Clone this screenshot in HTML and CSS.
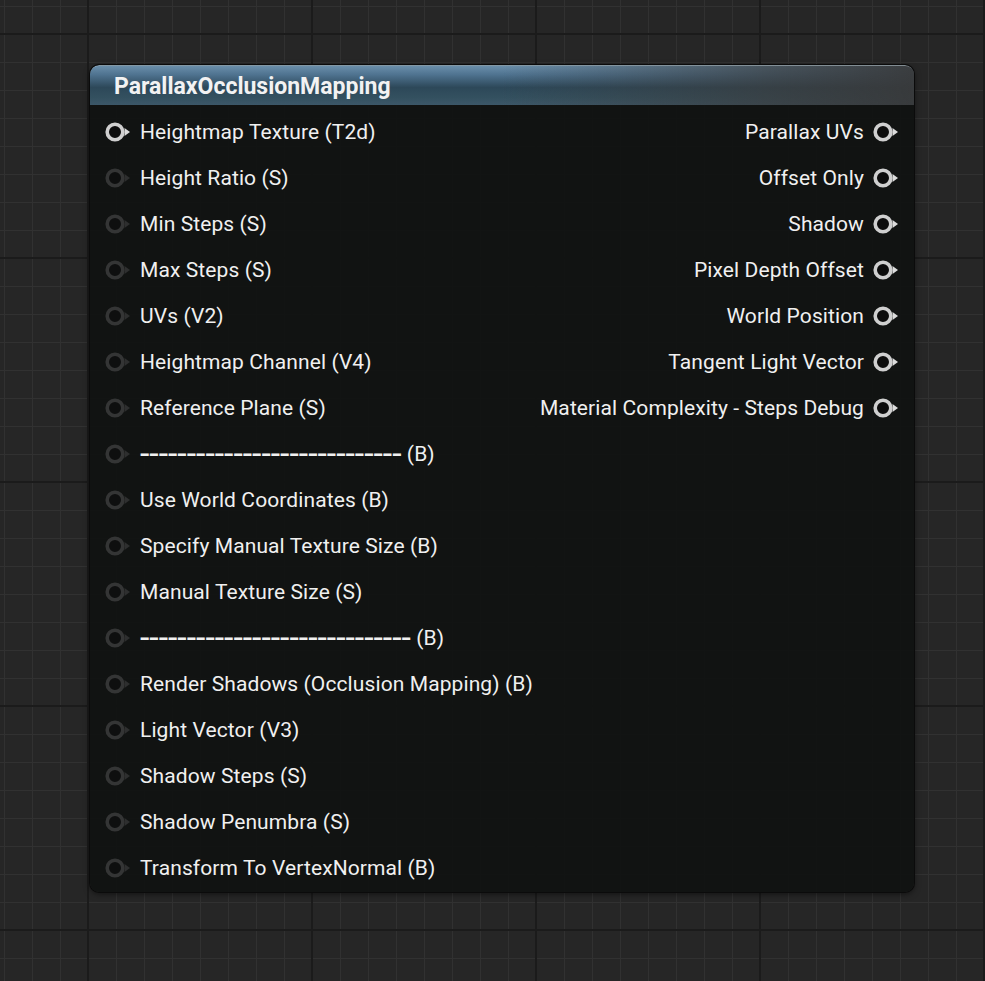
FILE: index.html
```html
<!DOCTYPE html>
<html>
<head>
<meta charset="utf-8">
<link rel="stylesheet" href="styles.css">
</head>
<body>
<div class="canvas">
  <div class="node">
    <div class="node-header">ParallaxOcclusionMapping</div>
    <div class="node-body">
      <div class="col inputs">
        <div class="pin-row"><svg class="pin on" viewBox="0 0 28 20"><circle cx="10" cy="10" r="7.8"/><polygon points="19.5,6 25,10 19.5,14"/></svg><span>Heightmap Texture (T2d)</span></div>
        <div class="pin-row"><svg class="pin" viewBox="0 0 28 20"><circle cx="10" cy="10" r="7.8"/><polygon points="19.5,6 25,10 19.5,14"/></svg><span>Height Ratio (S)</span></div>
        <div class="pin-row"><svg class="pin" viewBox="0 0 28 20"><circle cx="10" cy="10" r="7.8"/><polygon points="19.5,6 25,10 19.5,14"/></svg><span>Min Steps (S)</span></div>
        <div class="pin-row"><svg class="pin" viewBox="0 0 28 20"><circle cx="10" cy="10" r="7.8"/><polygon points="19.5,6 25,10 19.5,14"/></svg><span>Max Steps (S)</span></div>
        <div class="pin-row"><svg class="pin" viewBox="0 0 28 20"><circle cx="10" cy="10" r="7.8"/><polygon points="19.5,6 25,10 19.5,14"/></svg><span>UVs (V2)</span></div>
        <div class="pin-row"><svg class="pin" viewBox="0 0 28 20"><circle cx="10" cy="10" r="7.8"/><polygon points="19.5,6 25,10 19.5,14"/></svg><span>Heightmap Channel (V4)</span></div>
        <div class="pin-row"><svg class="pin" viewBox="0 0 28 20"><circle cx="10" cy="10" r="7.8"/><polygon points="19.5,6 25,10 19.5,14"/></svg><span>Reference Plane (S)</span></div>
        <div class="pin-row"><svg class="pin" viewBox="0 0 28 20"><circle cx="10" cy="10" r="7.8"/><polygon points="19.5,6 25,10 19.5,14"/></svg><span><span class="dashes">----------------------------</span> (B)</span></div>
        <div class="pin-row"><svg class="pin" viewBox="0 0 28 20"><circle cx="10" cy="10" r="7.8"/><polygon points="19.5,6 25,10 19.5,14"/></svg><span>Use World Coordinates (B)</span></div>
        <div class="pin-row"><svg class="pin" viewBox="0 0 28 20"><circle cx="10" cy="10" r="7.8"/><polygon points="19.5,6 25,10 19.5,14"/></svg><span>Specify Manual Texture Size (B)</span></div>
        <div class="pin-row"><svg class="pin" viewBox="0 0 28 20"><circle cx="10" cy="10" r="7.8"/><polygon points="19.5,6 25,10 19.5,14"/></svg><span>Manual Texture Size (S)</span></div>
        <div class="pin-row"><svg class="pin" viewBox="0 0 28 20"><circle cx="10" cy="10" r="7.8"/><polygon points="19.5,6 25,10 19.5,14"/></svg><span><span class="dashes">-----------------------------</span> (B)</span></div>
        <div class="pin-row"><svg class="pin" viewBox="0 0 28 20"><circle cx="10" cy="10" r="7.8"/><polygon points="19.5,6 25,10 19.5,14"/></svg><span>Render Shadows (Occlusion Mapping) (B)</span></div>
        <div class="pin-row"><svg class="pin" viewBox="0 0 28 20"><circle cx="10" cy="10" r="7.8"/><polygon points="19.5,6 25,10 19.5,14"/></svg><span>Light Vector (V3)</span></div>
        <div class="pin-row"><svg class="pin" viewBox="0 0 28 20"><circle cx="10" cy="10" r="7.8"/><polygon points="19.5,6 25,10 19.5,14"/></svg><span>Shadow Steps (S)</span></div>
        <div class="pin-row"><svg class="pin" viewBox="0 0 28 20"><circle cx="10" cy="10" r="7.8"/><polygon points="19.5,6 25,10 19.5,14"/></svg><span>Shadow Penumbra (S)</span></div>
        <div class="pin-row"><svg class="pin" viewBox="0 0 28 20"><circle cx="10" cy="10" r="7.8"/><polygon points="19.5,6 25,10 19.5,14"/></svg><span>Transform To VertexNormal (B)</span></div>
      </div>
      <div class="col outputs">
        <div class="pin-row"><span>Parallax UVs</span><svg class="pin on" viewBox="0 0 28 20"><circle cx="10" cy="10" r="7.8"/><polygon points="19.5,6 25,10 19.5,14"/></svg></div>
        <div class="pin-row"><span>Offset Only</span><svg class="pin on" viewBox="0 0 28 20"><circle cx="10" cy="10" r="7.8"/><polygon points="19.5,6 25,10 19.5,14"/></svg></div>
        <div class="pin-row"><span>Shadow</span><svg class="pin on" viewBox="0 0 28 20"><circle cx="10" cy="10" r="7.8"/><polygon points="19.5,6 25,10 19.5,14"/></svg></div>
        <div class="pin-row"><span>Pixel Depth Offset</span><svg class="pin on" viewBox="0 0 28 20"><circle cx="10" cy="10" r="7.8"/><polygon points="19.5,6 25,10 19.5,14"/></svg></div>
        <div class="pin-row"><span>World Position</span><svg class="pin on" viewBox="0 0 28 20"><circle cx="10" cy="10" r="7.8"/><polygon points="19.5,6 25,10 19.5,14"/></svg></div>
        <div class="pin-row"><span>Tangent Light Vector</span><svg class="pin on" viewBox="0 0 28 20"><circle cx="10" cy="10" r="7.8"/><polygon points="19.5,6 25,10 19.5,14"/></svg></div>
        <div class="pin-row"><span>Material Complexity - Steps Debug</span><svg class="pin on" viewBox="0 0 28 20"><circle cx="10" cy="10" r="7.8"/><polygon points="19.5,6 25,10 19.5,14"/></svg></div>
      </div>
    </div>
  </div>
</div>
</body>
</html>
```
FILE: styles.css
```css
html, body {
  margin: 0;
  padding: 0;
  height: 100%;
}
body {
  background-color: #262626;
  font-family: Roboto, "Liberation Sans", sans-serif;
  overflow: hidden;
}
.canvas {
  position: relative;
  width: 100%;
  height: 100%;
  background-image:
    linear-gradient(to right, #1b1b1b 2px, transparent 2px),
    linear-gradient(to bottom, #1b1b1b 2px, transparent 2px),
    linear-gradient(to right, #313131 1px, transparent 1px),
    linear-gradient(to bottom, #313131 1px, transparent 1px);
  background-size: 224px 224px, 224px 224px, 28px 28px, 28px 28px;
  background-position: 87px 0, 0 33px, 4px 0, 0 6px;
}
.node {
  position: absolute;
  left: 90px;
  top: 65px;
  width: 824px;
  border-radius: 9px;
  background: rgba(16, 18, 17, 0.93);
  box-shadow: 0 0 0 1px #0b0b0b, 0 2px 6px rgba(0, 0, 0, 0.55);
  overflow: hidden;
}
.node-header {
  height: 40px;
  box-sizing: border-box;
  padding-left: 24px;
  padding-top: 1px;
  display: flex;
  align-items: center;
  font-weight: 700;
  font-size: 23px;
  color: #f2f2f2;
  border-top: 1px solid rgba(190, 205, 215, 0.55);
  border-radius: 9px 9px 0 0;
  background:
    linear-gradient(to right, rgba(58, 58, 58, 0) 50%, rgba(58, 60, 61, 0.7) 82%, rgba(56, 57, 58, 0.95) 100%),
    linear-gradient(to bottom, #6a8eaa 0%, #4f7390 22%, #2d4859 55%, #33505f 80%, #3c5768 100%);
}
.node-body {
  display: flex;
  justify-content: space-between;
  padding: 4px 13px 1px 15px;
}
.col {
  display: flex;
  flex-direction: column;
}
.outputs {
  align-items: flex-end;
}
.pin-row {
  height: 46px;
  display: flex;
  align-items: center;
  font-size: 21px;
  letter-spacing: 0.1px;
  color: #f0f0f0;
  white-space: nowrap;
}
.dashes {
  font-size: 33.8px;
  letter-spacing: 0;
  vertical-align: -4px;
  line-height: 1;
}
.inputs .pin-row .pin {
  margin-right: 7px;
}
.outputs .pin-row .pin {
  margin-left: 9px;
}
.pin {
  width: 28px;
  height: 20px;
  flex: none;
  filter: blur(0.35px);
}
.pin circle {
  fill: #0e0f0f;
  stroke: #343535;
  stroke-width: 3.6;
}
.pin polygon {
  fill: #2e2f2f;
}
.pin.on circle {
  fill: #0c0c0c;
  stroke: #cfcfcf;
}
.pin.on polygon {
  fill: #dcdcdc;
}
```
